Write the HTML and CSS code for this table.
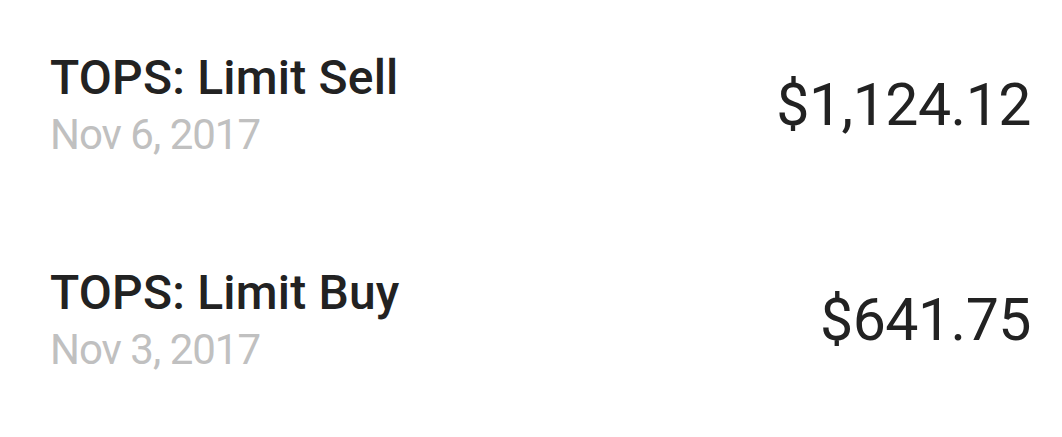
FILE: index.html
```html
<!DOCTYPE html>
<html>
<head>
<meta charset="utf-8">
<link rel="stylesheet" href="styles.css">
</head>
<body>
<div class="orders">
  <div class="order">
    <div class="info">
      <div class="title">TOPS: Limit Sell</div>
      <div class="date">Nov 6, 2017</div>
    </div>
    <div class="amount">$1,124.12</div>
  </div>
  <div class="order">
    <div class="info">
      <div class="title">TOPS: Limit Buy</div>
      <div class="date">Nov 3, 2017</div>
    </div>
    <div class="amount">$641.75</div>
  </div>
</div>
</body>
</html>
```
FILE: styles.css
```css
html, body {
  margin: 0;
  padding: 0;
  background: #ffffff;
}
body {
  font-family: Roboto, "DejaVu Sans", sans-serif;
  color: #222222;
}
.orders {
  display: flex;
  flex-direction: column;
  padding: 0 31px 0 50px;
}
.order {
  height: 215px;
  display: flex;
  align-items: center;
  justify-content: space-between;
}
.info {
  display: flex;
  flex-direction: column;
  padding-bottom: 4px;
}
.title {
  font-size: 48px;
  font-weight: 500;
  line-height: 52px;
  letter-spacing: 0.2px;
  color: #222222;
}
.date {
  margin-top: 7px;
  font-size: 42px;
  font-weight: 400;
  line-height: 48px;
  letter-spacing: -1px;
  color: #c0c0c0;
}
.amount {
  margin-bottom: 6px;
  font-size: 59px;
  font-weight: 400;
  line-height: 64px;
  letter-spacing: -0.5px;
  color: #222222;
}
```
